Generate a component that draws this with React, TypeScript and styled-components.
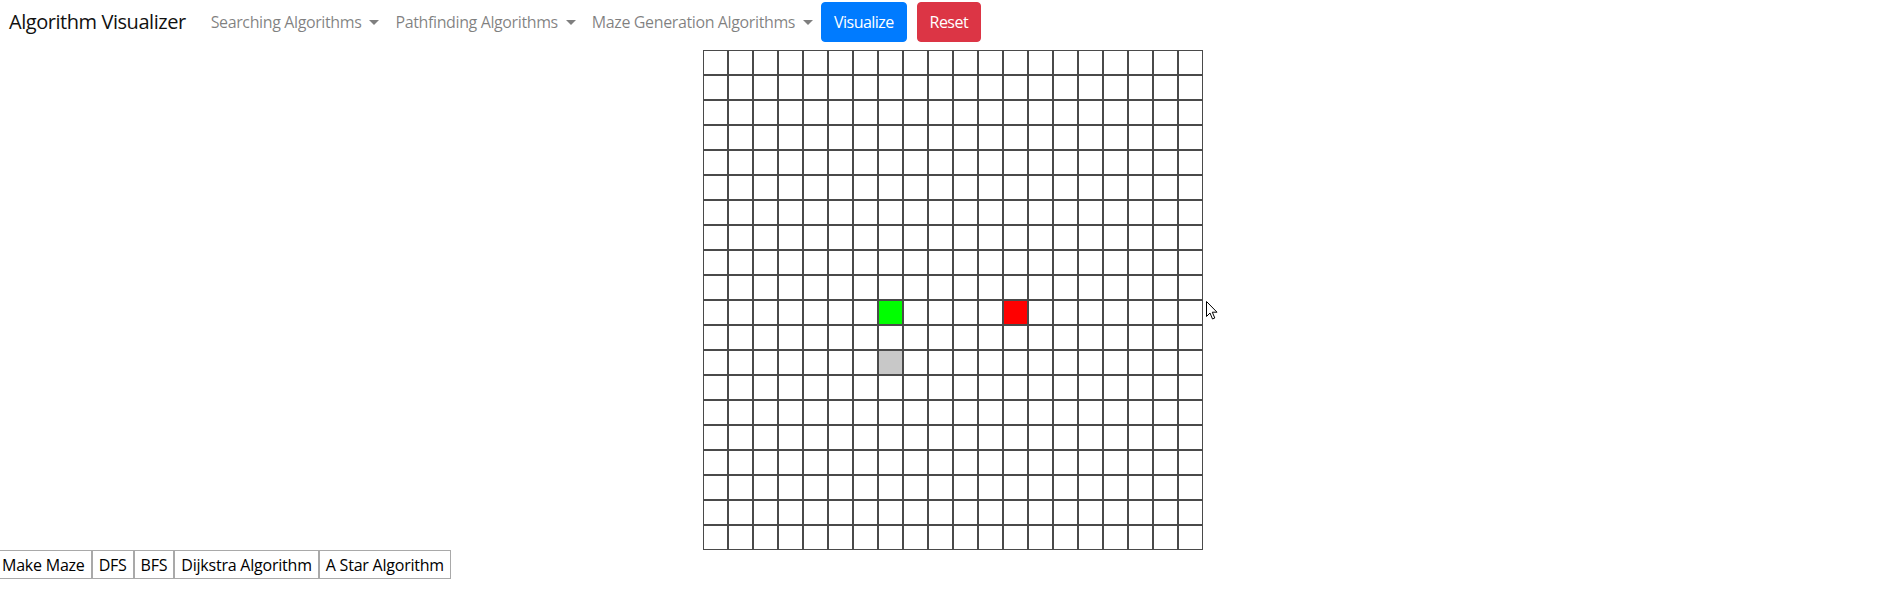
import React from "react";
import styled, { createGlobalStyle } from "styled-components";

const GlobalStyle = createGlobalStyle`
  html, body { margin: 0; padding: 0; background: #fff; }
  body {
    font-family: "Segoe UI", "Open Sans", "Noto Sans", sans-serif;
    color: #212529;
    font-size: 16px;
    overflow: hidden;
  }
  * { box-sizing: border-box; }
`;

const Page = styled.div`
  position: relative;
  width: 100%;
  min-height: 592px;
`;

const NavBar = styled.nav`
  display: flex;
  align-items: center;
  height: 44px;
  padding: 0 0 0 9px;
`;

const Brand = styled.span`
  font-size: 20px;
  line-height: 30px;
  color: #111;
  margin-right: 17px;
  white-space: nowrap;
  letter-spacing: -0.45px;
`;

const NavLink = styled.span`
  display: flex;
  align-items: center;
  padding: 8px 8px;
  font-size: 16px;
  line-height: 24px;
  color: rgba(0, 0, 0, 0.5);
  white-space: nowrap;
  letter-spacing: -0.38px;
`;

const Caret = styled.span`
  display: inline-block;
  margin-left: 8px;
  width: 0;
  height: 0;
  border-top: 5px solid rgba(0, 0, 0, 0.5);
  border-left: 5px solid transparent;
  border-right: 5px solid transparent;
`;

const ActionButton = styled.button<{ $variant: "primary" | "danger" }>`
  height: 40px;
  padding: 0 12px;
  margin-right: 10px;
  border: 1px solid ${(p) => (p.$variant === "primary" ? "#007bff" : "#dc3545")};
  background: ${(p) => (p.$variant === "primary" ? "#007bff" : "#dc3545")};
  color: #fff;
  border-radius: 4px;
  font-family: inherit;
  font-size: 16px;
  letter-spacing: -0.55px;
  cursor: pointer;
`;

const GridWrap = styled.div`
  display: flex;
  justify-content: center;
  padding-left: 9px;
  margin-top: 6px;
`;

const Grid = styled.div`
  display: grid;
  grid-template-columns: repeat(20, 25px);
  grid-auto-rows: 25px;
`;

type CellKind = "empty" | "start" | "end" | "wall";

const cellColors: Record<CellKind, string> = {
  empty: "#ffffff",
  start: "#00ff00",
  end: "#ff0000",
  wall: "#c8c8c8",
};

const Cell = styled.div<{ $kind: CellKind }>`
  border: 1px solid #4a4a4a;
  background: ${(p) => cellColors[p.$kind]};
`;

const ButtonRow = styled.div`
  display: flex;
  height: 29px;
  margin-left: -5px;
`;

const PlainButton = styled.button`
  height: 29px;
  padding: 0 6px;
  margin: 0;
  background: #fff;
  border: 1px solid #a9a9a9;
  color: #000;
  font-family: inherit;
  font-size: 16px;
  letter-spacing: -0.22px;
  white-space: nowrap;
  border-radius: 0;
`;

const Cursor = styled.svg`
  position: absolute;
  left: 1206px;
  top: 301px;
`;

function kindAt(r: number, c: number): CellKind {
  if (r === 10 && c === 7) return "start";
  if (r === 10 && c === 12) return "end";
  if (r === 12 && c === 7) return "wall";
  return "empty";
}

export default function App() {
  const cells: React.ReactNode[] = [];
  for (let r = 0; r < 20; r++) {
    for (let c = 0; c < 20; c++) {
      cells.push(<Cell key={`${r}-${c}`} $kind={kindAt(r, c)} />);
    }
  }
  return (
    <Page>
      <GlobalStyle />
      <NavBar>
        <Brand>Algorithm Visualizer</Brand>
        <NavLink>
          Searching Algorithms
          <Caret />
        </NavLink>
        <NavLink>
          Pathfinding Algorithms
          <Caret />
        </NavLink>
        <NavLink>
          Maze Generation Algorithms
          <Caret />
        </NavLink>
        <ActionButton $variant="primary">Visualize</ActionButton>
        <ActionButton $variant="danger">Reset</ActionButton>
      </NavBar>
      <GridWrap>
        <Grid>{cells}</Grid>
      </GridWrap>
      <ButtonRow>
        <PlainButton>Make Maze</PlainButton>
        <PlainButton>DFS</PlainButton>
        <PlainButton>BFS</PlainButton>
        <PlainButton>Dijkstra Algorithm</PlainButton>
        <PlainButton>A Star Algorithm</PlainButton>
      </ButtonRow>
      <Cursor width="13" height="20" viewBox="0 0 13 20">
        <path
          d="M0.5 0.5 L0.5 15.5 L4 12 L6.5 18 L8.8 17 L6.3 11.2 L11 11.2 Z"
          fill="#fff"
          stroke="#000"
          strokeWidth="1"
          strokeLinejoin="miter"
        />
      </Cursor>
    </Page>
  );
}
